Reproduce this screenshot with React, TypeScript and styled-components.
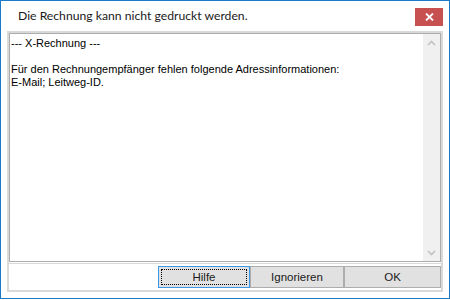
import React from "react";
import styled, { createGlobalStyle } from "styled-components";

const Global = createGlobalStyle`
  html, body { margin: 0; padding: 0; background: #ffffff; }
  #root { width: 450px; height: 300px; }
`;

const Window = styled.div`
  box-sizing: border-box;
  width: 450px;
  height: 299px;
  border: 1px solid #1979ca;
  background: #ffffff;
  display: flex;
  flex-direction: column;
`;

const TitleBar = styled.div`
  height: 30px;
  display: flex;
  align-items: flex-start;
  padding: 0 6px 0 17px;
`;

const Title = styled.div`
  font-family: Lato, "Noto Sans", sans-serif;
  font-size: 12.2px;
  line-height: 16px;
  margin-top: 7px;
  color: #1a1a1a;
  white-space: nowrap;
`;

const CloseButton = styled.div`
  margin-left: auto;
  margin-top: 7px;
  width: 28px;
  height: 18px;
  background: #c75050;
  display: flex;
  align-items: center;
  justify-content: center;
`;

const Body = styled.div`
  flex: 1;
  display: flex;
  padding: 0 6px 6px 6px;
`;

const Panel = styled.div`
  flex: 1;
  display: flex;
  flex-direction: column;
  border: 2px solid #d9d9d9;
  background: #ffffff;
`;

const TextBox = styled.div`
  height: 229px;
  box-sizing: border-box;
  border: 1px solid #acacac;
  display: flex;
`;

const TextContent = styled.div`
  flex: 1;
  padding: 3px 0 0 1px;
  font-family: "Liberation Sans", Arial, sans-serif;
  font-size: 11px;
  line-height: 13px;
  color: #000000;
  white-space: pre;
`;

const ScrollBar = styled.div`
  width: 17px;
  background: #f0f0f0;
  display: flex;
  flex-direction: column;
  justify-content: space-between;
`;

const ScrollArrow = styled.div`
  height: 17px;
  display: flex;
  align-items: center;
  justify-content: center;
`;

const Divider = styled.div`
  height: 1px;
  margin-top: 1px;
  background: #d9d9d9;
`;

const ButtonRow = styled.div`
  display: flex;
  justify-content: flex-end;
  padding: 2px 0 2px 0;
`;

const Button = styled.div<{ $w: number; $focused?: boolean }>`
  box-sizing: border-box;
  width: ${(p) => p.$w}px;
  height: 22px;
  background: #e1e1e1;
  border: 1px solid ${(p) => (p.$focused ? "#3c97e8" : "#adadad")};
  font-family: "Liberation Sans", Arial, sans-serif;
  font-size: 11.5px;
  color: #1a1a1a;
  display: flex;
  align-items: center;
  justify-content: center;
  position: relative;
`;

const FocusRect = styled.div`
  position: absolute;
  inset: 2px;
  border: 1px dotted #000000;
`;

const Chevron = ({ up }: { up?: boolean }) => (
  <svg width="9" height="6" viewBox="0 0 9 6">
    <path
      d={up ? "M1 5 L4.5 1.5 L8 5" : "M1 1 L4.5 4.5 L8 1"}
      fill="none"
      stroke="#c2c2c2"
      strokeWidth="1.6"
    />
  </svg>
);

export default function App() {
  return (
    <>
      <Global />
      <Window>
        <TitleBar>
          <Title>Die Rechnung kann nicht gedruckt werden.</Title>
          <CloseButton>
            <svg width="9" height="8" viewBox="0 0 9 8">
              <path d="M1 0.5 L8 7.5 M8 0.5 L1 7.5" stroke="#ffffff" strokeWidth="1.8" />
            </svg>
          </CloseButton>
        </TitleBar>
        <Body>
          <Panel>
            <TextBox>
              <TextContent>
                {"--- X-Rechnung ---\n\nFür den Rechnungempfänger fehlen folgende Adressinformationen:\nE-Mail; Leitweg-ID."}
              </TextContent>
              <ScrollBar>
                <ScrollArrow>
                  <Chevron up />
                </ScrollArrow>
                <ScrollArrow>
                  <Chevron />
                </ScrollArrow>
              </ScrollBar>
            </TextBox>
            <Divider />
            <ButtonRow>
              <Button $w={92} $focused>
                <FocusRect />
                Hilfe
              </Button>
              <Button $w={94}>Ignorieren</Button>
              <Button $w={97}>OK</Button>
            </ButtonRow>
          </Panel>
        </Body>
      </Window>
    </>
  );
}
